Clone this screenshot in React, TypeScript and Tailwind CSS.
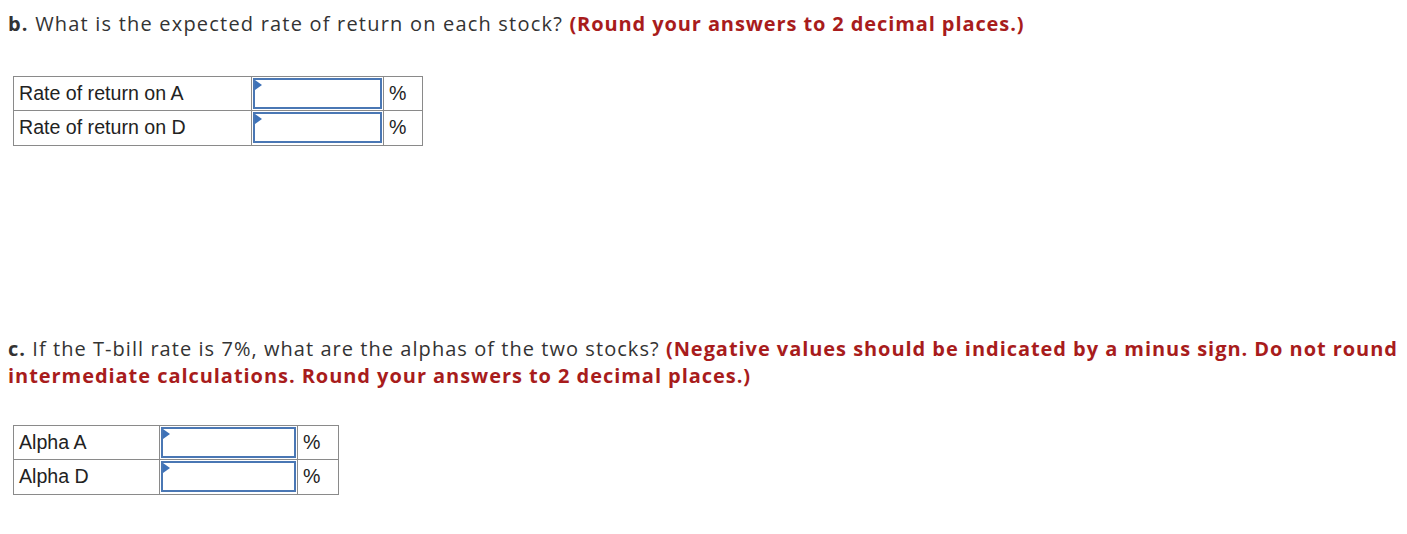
import React from "react";

const font = { fontFamily: "'Open Sans', Lato, sans-serif" };

function InputCell({ w }: { w: string }) {
  return (
    <td className={`border border-[#8a8a8a] p-[1px] align-top ${w}`}>
      <div className="relative h-[31px] border-2 border-[#4a77b4] bg-white">
        <div className="absolute left-0 top-0 h-0 w-0 border-y-[5px] border-l-[7px] border-y-transparent border-l-[#3e72b8]" />
      </div>
    </td>
  );
}

function Row({ label, w1, w2, w3, h }: { label: string; w1: string; w2: string; w3: string; h: string }) {
  return (
    <tr className={h}>
      <td className={`border border-[#8a8a8a] px-[5px] text-[19.6px] text-[#222] ${w1}`} style={{ fontFamily: "'Liberation Sans', Arial, sans-serif" }}>
        {label}
      </td>
      <InputCell w={w2} />
      <td className={`border border-[#8a8a8a] px-[5px] text-[19.6px] text-[#222] ${w3}`} style={{ fontFamily: "'Liberation Sans', Arial, sans-serif" }}>
        %
      </td>
    </tr>
  );
}

export default function App() {
  return (
    <div className="w-[1407px] h-[534px] bg-white pl-[8px] pt-[10px] text-[#333]" style={font}>
      <p className="text-[20px] leading-[27px] tracking-[1.2px]">
        <b className="font-bold">b.</b> What is the expected rate of return on each stock?{" "}
        <b className="font-bold text-[#a81c1c] tracking-[0.9px]">(Round your answers to 2 decimal places.)</b>
      </p>
      <table className="ml-[5px] mt-[39px] border-collapse">
        <tbody>
          <Row label="Rate of return on A" w1="w-[238px]" w2="w-[132px]" w3="w-[39px]" h="h-[34px]" />
          <Row label="Rate of return on D" w1="w-[238px]" w2="w-[132px]" w3="w-[39px]" h="h-[35px]" />
        </tbody>
      </table>
      <p className="mt-[189px] text-[20px] leading-[27px] tracking-[1.05px]">
        <b className="font-bold">c.</b> If the T-bill rate is 7%, what are the alphas of the two stocks?{" "}
        <b className="font-bold text-[#a81c1c] tracking-[0.95px]">
          (Negative values should be indicated by a minus sign. Do not round intermediate calculations. Round your answers to 2 decimal places.)
        </b>
      </p>
      <table className="ml-[5px] mt-[36px] border-collapse">
        <tbody>
          <Row label="Alpha A" w1="w-[146px]" w2="w-[138px]" w3="w-[41px]" h="h-[34px]" />
          <Row label="Alpha D" w1="w-[146px]" w2="w-[138px]" w3="w-[41px]" h="h-[35px]" />
        </tbody>
      </table>
    </div>
  );
}
